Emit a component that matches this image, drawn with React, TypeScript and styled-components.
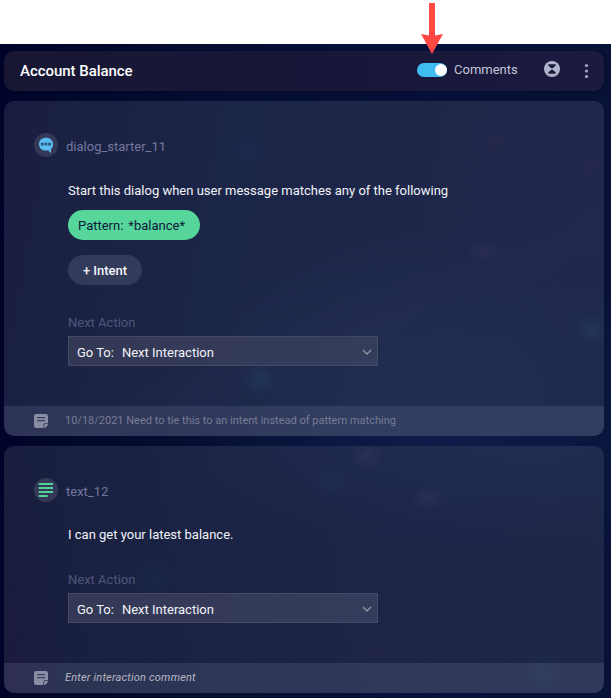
import React from "react";
import styled, { createGlobalStyle, css } from "styled-components";

const GlobalStyle = createGlobalStyle`
  * { box-sizing: border-box; }
  body {
    margin: 0;
    background: #fff;
    font-family: Roboto, "Liberation Sans", sans-serif;
    font-size: 13px;
    color: #f2f3f8;
  }
`;

const Page = styled.div`
  position: relative;
  width: 611px;
  height: 698px;
  padding-top: 44px;
  overflow: hidden;
`;

const Pointer = styled.svg`
  position: absolute;
  left: 420px;
  top: 2px;
  z-index: 2;
`;

const Workspace = styled.main`
  display: flex;
  flex-direction: column;
  gap: 10px;
  height: 654px;
  padding: 7px 7px 5px 4px;
  background:
    radial-gradient(ellipse 260px 200px at 440px 380px, #101d4a, rgba(16, 29, 74, 0)),
    linear-gradient(90deg, #01042a 0, #050d31 30%, #07113a 70%, #081237 100%);
`;

const TopBar = styled.header`
  display: flex;
  align-items: center;
  height: 40px;
  padding: 0 12px 0 16px;
  border-radius: 10px;
  background: linear-gradient(90deg, #171734, #18173a 60%, #1b1b40);
  box-shadow: 0 1px 5px rgba(0, 0, 20, 0.35);
`;

const Title = styled.h1`
  margin: 0 auto 0 0;
  font-size: 15px;
  font-weight: 500;
  letter-spacing: -0.04px;
  color: #fff;
`;

const Toggle = styled.span`
  display: flex;
  justify-content: flex-end;
  width: 30px;
  height: 14px;
  margin-top: -2px;
  border-radius: 7px;
  background: #3fbcf0;
`;

const Knob = styled.span`
  width: 12px;
  height: 12px;
  margin: 1px 0;
  border-radius: 50%;
  background: #fff;
`;

const ToggleLabel = styled.span`
  width: 64px;
  margin: -3px 26px 0 7px;
  white-space: nowrap;
  color: #c3c5d7;
`;

const CollapseIcon = styled.svg`
  margin: -4px 21px 0 0;
`;

const MoreIcon = styled.svg`
  margin-top: -1px;
`;

const firstGlow = css`
  background:
    radial-gradient(circle at 245px 48px, rgba(35, 65, 120, 0.2), rgba(35, 65, 120, 0) 14px),
    radial-gradient(circle at 490px 40px, rgba(75, 39, 84, 0.22), rgba(75, 39, 84, 0) 12px),
    radial-gradient(circle at 587px 66px, rgba(65, 34, 80, 0.2), rgba(65, 34, 80, 0) 12px),
    radial-gradient(ellipse 18px 12px at 480px 150px, rgba(64, 54, 100, 0.3), rgba(64, 54, 100, 0)),
    radial-gradient(circle at 588px 229px, rgba(31, 77, 112, 0.35), rgba(31, 77, 112, 0) 16px),
    radial-gradient(circle at 256px 279px, rgba(28, 77, 109, 0.35), rgba(28, 77, 109, 0) 16px),
    linear-gradient(158deg, transparent 58%, rgba(58, 50, 91, 0.09) 64%, transparent 69%),
    radial-gradient(ellipse 260px 160px at 420px 290px, #212e52, rgba(33, 46, 82, 0)),
    linear-gradient(100deg, #1a1b3f 0, #1a2143 10%, #1b2547 35%, #1e274a 70%, #20284d 100%);
`;

const secondGlow = css`
  background:
    radial-gradient(circle at 363px 9px, rgba(68, 66, 108, 0.3), rgba(68, 66, 108, 0) 17px),
    radial-gradient(circle at 328px 34px, rgba(29, 71, 111, 0.2), rgba(29, 71, 111, 0) 16px),
    radial-gradient(ellipse 18px 12px at 424px 52px, rgba(66, 65, 103, 0.3), rgba(66, 65, 103, 0)),
    radial-gradient(circle at 149px 134px, rgba(22, 57, 99, 0.22), rgba(22, 57, 99, 0) 20px),
    radial-gradient(circle at 370px 206px, rgba(53, 35, 82, 0.3), rgba(53, 35, 82, 0) 11px),
    radial-gradient(circle at 539px 227px, rgba(33, 69, 90, 0.28), rgba(33, 69, 90, 0) 20px),
    radial-gradient(ellipse 360px 100px at 520px 0, #212c52, rgba(33, 44, 82, 0)),
    linear-gradient(80deg, #1b1a3d 0, #19203f 12%, #1b2445 40%, #1d2549 75%, #1e2748 100%);
`;

const Card = styled.section<{ $height: number; $second?: boolean }>`
  display: flex;
  flex-direction: column;
  height: ${(p) => p.$height}px;
  overflow: hidden;
  border-radius: 10px;
  ${(p) => (p.$second ? secondGlow : firstGlow)}
`;

const CardHeading = styled.div`
  display: flex;
  align-items: center;
  gap: 8px;
  margin: 32px 0 0 30px;
  height: 24px;
  color: #7378a0;
`;

const HeadingName = styled.span`
  padding-top: 3px;
`;

const IconDisc = styled.span`
  display: flex;
  align-items: center;
  justify-content: center;
  width: 24px;
  height: 24px;
  border-radius: 50%;
  background: #353957;
`;

const Body = styled.div`
  display: flex;
  flex-direction: column;
  align-items: flex-start;
  flex: 1;
  padding-left: 64px;
`;

const Prompt = styled.p<{ $top: number }>`
  height: 16px;
  margin: ${(p) => p.$top}px 0 0;
  line-height: 16px;
`;

const Pattern = styled.span`
  display: flex;
  align-items: center;
  gap: 5px;
  width: 132px;
  height: 30px;
  margin-top: 11px;
  padding: 1px 0 0 10px;
  border-radius: 15px;
  background: #57d69b;
  color: #0c1739;
`;

const IntentButton = styled.button`
  width: 74px;
  height: 30px;
  margin: 15px 0 0;
  padding: 0;
  border: 0;
  border-radius: 15px;
  background: #333b5a;
  color: #f4f5f9;
  font: 500 13px Roboto, "Liberation Sans", sans-serif;
`;

const FieldLabel = styled.label<{ $top: number }>`
  height: 16px;
  margin-top: ${(p) => p.$top}px;
  line-height: 16px;
  color: #50557b;
`;

const Select = styled.div`
  display: flex;
  align-items: center;
  gap: 8px;
  width: 310px;
  height: 30px;
  margin-top: 5px;
  padding: 2px 5px 0 8px;
  border: 1px solid #454965;
  background: linear-gradient(100deg, #333855, #353d5c);

  svg { margin: -1px 0 0 auto; }
`;

const CommentBar = styled.footer<{ $empty?: boolean }>`
  display: flex;
  align-items: center;
  gap: 17px;
  height: 30px;
  padding-left: 30px;
  background: rgba(151, 157, 190, 0.16);
  color: ${(p) => (p.$empty ? "#b5b7c2" : "#777c94")};
  font-size: 11px;
  letter-spacing: ${(p) => (p.$empty ? "0.19px" : "0")};
  font-style: ${(p) => (p.$empty ? "italic" : "normal")};
`;

const CommentText = styled.span`
  padding-bottom: 1px;
`;

const ChatIcon = () => (
  <svg width="16" height="18" viewBox="0 0 16 18">
    <path d="M8 1.800C3.900 1.800 1 4.400 1 8.200s2.800 6.400 6.800 6.400c.9 0 1.700-.1 2.400-.3l2.800 2.900v-4.200C14.400 11.800 15 10.100 15 8.200 15 4.400 12.100 1.800 8 1.800Z" fill="#5bbcf1" />
    <path d="M3 6.800h2.700v2.600H3Zm3.600 0h2.700v2.600H6.600Zm3.600 0H13v2.600h-2.800Z" fill="#28567c" />
  </svg>
);

const LinesIcon = () => (
  <svg width="16" height="16" viewBox="0 0 16 16">
    <path d="M.7 2H15M.7 6H15M.7 10H15M.7 14h9" stroke="#52d39a" strokeWidth="2.200" />
  </svg>
);

const NoteIcon = () => (
  <svg width="14" height="14" viewBox="0 0 14 14">
    <path d="M2.300 0h9.400Q14 0 14 2.300V9.300h-2.500Q9.300 9.300 9.300 11.500V14H2.300Q0 14 0 11.700V2.300Q0 0 2.300 0Z" fill="#8a8da4" />
    <path d="M10 14v-2.300Q10 10 11.700 10H14L13.500 11.500 11.500 13.500Z" fill="#8a8da4" />
    <path d="M3 3.600h8M3 6.600h8" stroke="#3b4060" strokeWidth="1.200" />
  </svg>
);

const Chevron = () => (
  <svg width="10" height="8" viewBox="0 0 10 8" fill="none">
    <path d="m1 2 4 4 4-4" stroke="#8f929d" strokeWidth="1.500" />
  </svg>
);

const NextAction = ({ top }: { top: number }) => (
  <>
    <FieldLabel $top={top}>Next Action</FieldLabel>
    <Select>
      <span>Go To:</span>
      <span>Next Interaction</span>
      <Chevron />
    </Select>
  </>
);

export default function App() {
  return (
    <Page>
      <GlobalStyle />
      <Pointer width="24" height="54" viewBox="0 0 24 54">
        <path d="M9 1h6v32.500l8-1.500-11 20L1 32l8 1.500Z" fill="#ff4743" />
      </Pointer>
      <Workspace>
        <TopBar>
          <Title>Account Balance</Title>
          <Toggle role="switch" aria-checked="true"><Knob /></Toggle>
          <ToggleLabel>Comments</ToggleLabel>
          <CollapseIcon width="16" height="16" viewBox="0 0 16 16">
            <circle cx="8" cy="8" r="8" fill="#b0b4cd" />
            <path d="M4.300 3.300h7.400v1.200L8.800 7.300H7.200L4.300 4.500ZM4.300 12.700h7.400v-1.200L8.800 8.700H7.200l-2.900 2.800Z" fill="#1a1a3d" />
          </CollapseIcon>
          <MoreIcon width="11" height="16" viewBox="0 0 11 16" fill="#a5a8c1">
            <circle cx="5.500" cy="2.500" r="1.600" />
            <circle cx="5.500" cy="8" r="1.600" />
            <circle cx="5.500" cy="13.500" r="1.600" />
          </MoreIcon>
        </TopBar>
        <Card $height={335}>
          <CardHeading>
            <IconDisc><ChatIcon /></IconDisc>
            <HeadingName>dialog_starter_11</HeadingName>
          </CardHeading>
          <Body>
            <Prompt $top={26}>Start this dialog when user message matches any of the following</Prompt>
            <Pattern><span>Pattern:</span><span>*balance*</span></Pattern>
            <IntentButton>+ Intent</IntentButton>
            <NextAction top={30} />
          </Body>
          <CommentBar>
            <NoteIcon />
            <CommentText>10/18/2021 Need to tie this to an intent instead of pattern matching</CommentText>
          </CommentBar>
        </Card>
        <Card $height={247} $second>
          <CardHeading>
            <IconDisc><LinesIcon /></IconDisc>
            <HeadingName>text_12</HeadingName>
          </CardHeading>
          <Body>
            <Prompt $top={25}>I can get your latest balance.</Prompt>
            <NextAction top={29} />
          </Body>
          <CommentBar $empty>
            <NoteIcon />
            <CommentText>Enter interaction comment</CommentText>
          </CommentBar>
        </Card>
      </Workspace>
    </Page>
  );
}
